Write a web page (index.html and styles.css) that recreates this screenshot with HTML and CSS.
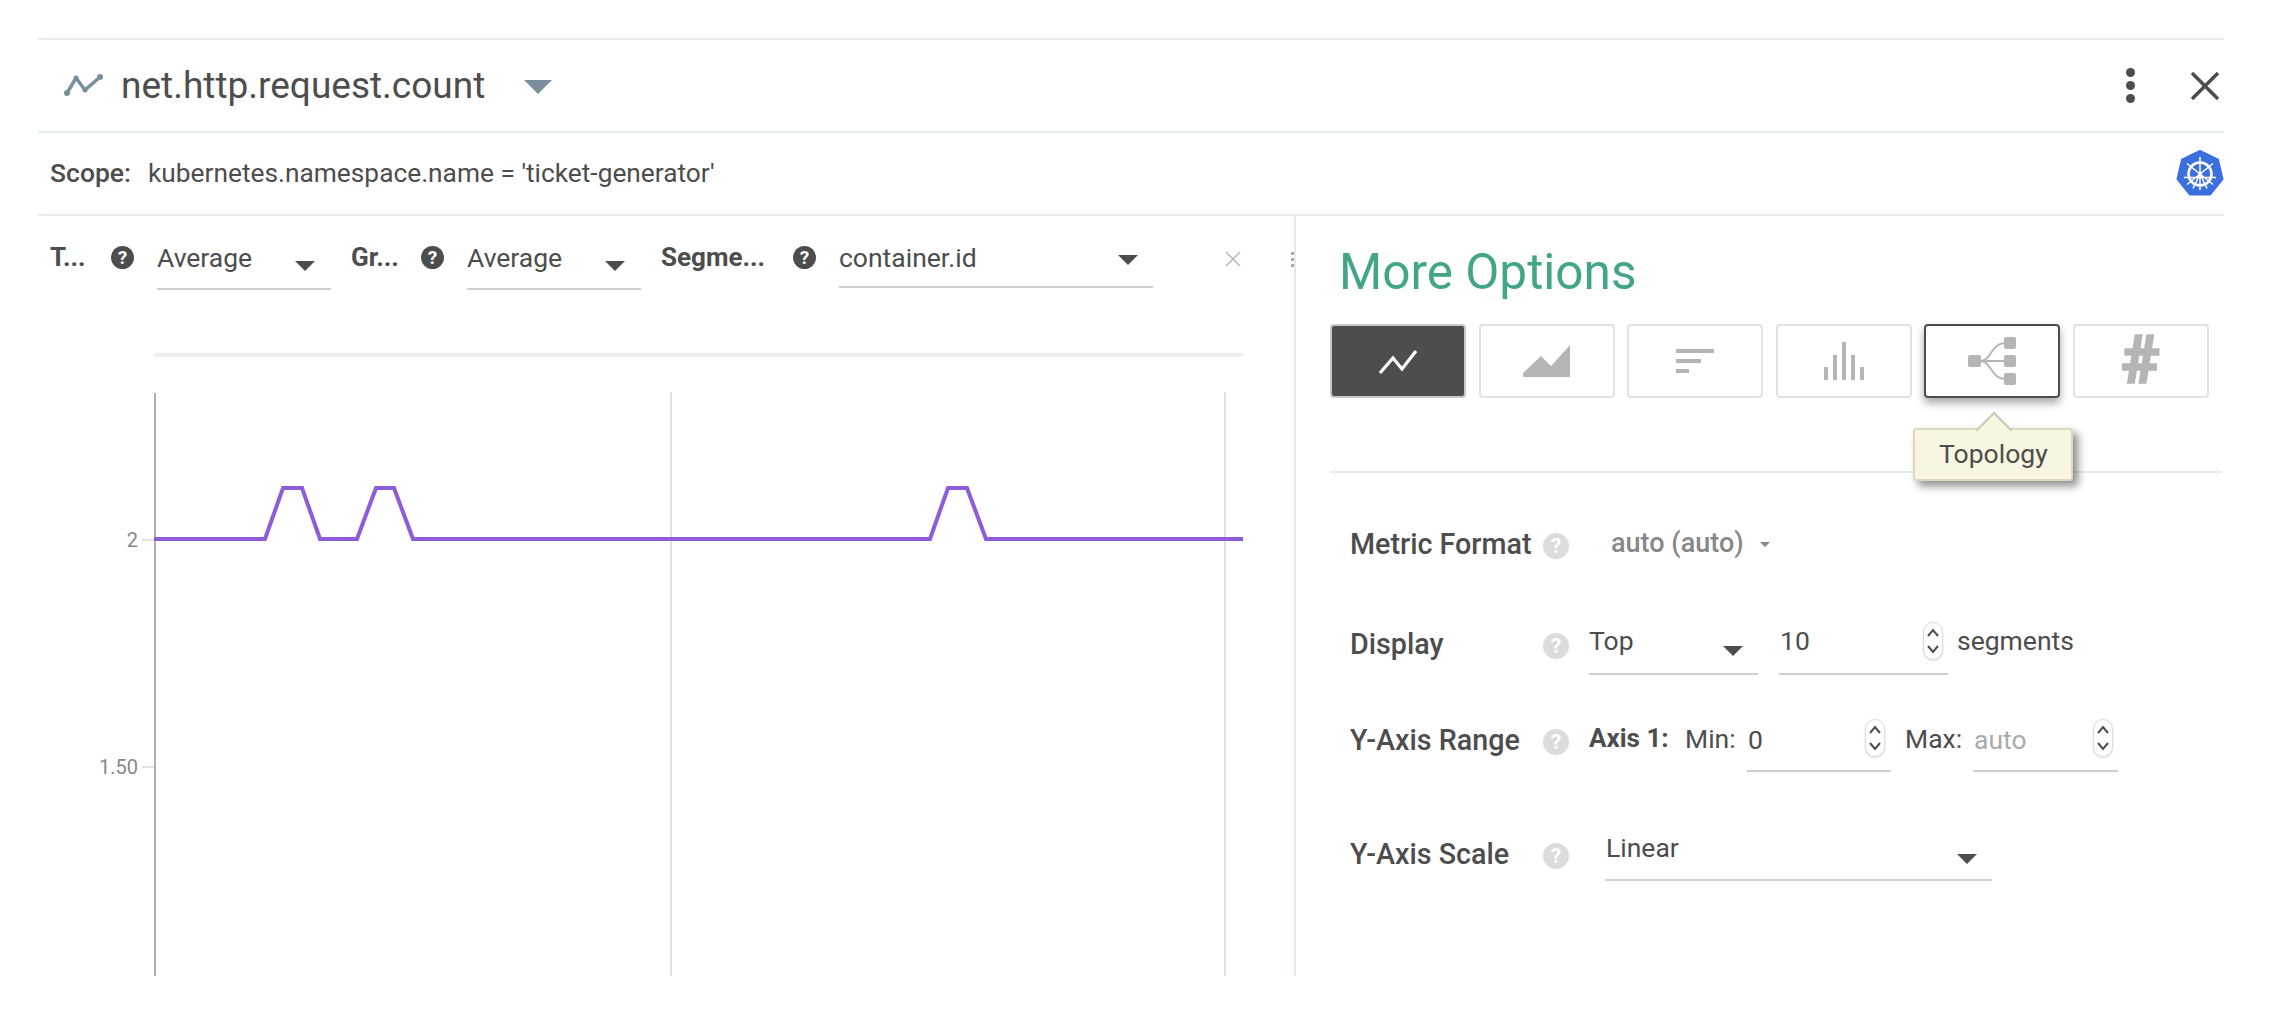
FILE: index.html
```html
<!DOCTYPE html>
<html lang="en">
<head>
<meta charset="utf-8">
<title>net.http.request.count</title>
<link rel="stylesheet" href="styles.css">
</head>
<body>
<div class="panel">
  <header class="titlebar">
    <svg class="trend" viewBox="0 0 40 22" width="40" height="22"><path d="M3 19 12 4 21 16 36 3" fill="none" stroke="#7a8f9e" stroke-width="3.500" stroke-linejoin="round"/><circle cx="3" cy="19" r="3" fill="#7a8f9e"/><circle cx="12" cy="4" r="2.500" fill="#7a8f9e"/><circle cx="21" cy="16" r="2.500" fill="#7a8f9e"/><circle cx="36" cy="3" r="3" fill="#7a8f9e"/></svg>
    <h1 class="metric">net.http.request.count</h1>
    <span class="title-caret"></span>
    <span class="kebab"><i></i><i></i><i></i></span>
    <svg class="close" viewBox="0 0 28 28" width="28" height="28"><path d="M1 1 27 27M27 1 1 27" stroke="#4d4d4d" stroke-width="3.500" fill="none"/></svg>
  </header>
  <div class="scopebar">
    <span class="scope-label">Scope:</span>
    <span class="scope-value">kubernetes.namespace.name = 'ticket-generator'</span>
    <svg class="k8s" viewBox="0 0 48 48" width="48" height="48">
      <path d="M24 1 42 9.700 46.500 29 34 44.500 14 44.500 1.500 29 6 9.700Z" fill="#3c6fde" stroke="#3c6fde" stroke-width="2" stroke-linejoin="round"/>
      <circle cx="24" cy="24" r="11.500" fill="none" stroke="#fff" stroke-width="2.600"/>
      <circle cx="24" cy="24" r="2" fill="#fff"/>
      <path d="M24 7V40M11 13.500 37 34.500M37 13.500 11 34.500M8 27.500 40 27.500M17 38.500 24 24 31 38.500" stroke="#fff" stroke-width="1.500" fill="none"/>
    </svg>
  </div>
  <div class="main">
    <section class="left">
      <div class="filters">
        <b class="flabel f-t">T...</b><span class="help-dark">?</span>
        <div class="select s-short"><span>Average</span><i class="caret c-low"></i></div>
        <b class="flabel f-gr">Gr...</b><span class="help-dark">?</span>
        <div class="select s-short"><span>Average</span><i class="caret c-low"></i></div>
        <b class="flabel f-seg">Segme...</b><span class="help-dark">?</span>
        <div class="select s-long"><span>container.id</span><i class="caret"></i></div>
        <svg class="clear" viewBox="0 0 16 16" width="16" height="16"><path d="M1 1 15 15M15 1 1 15" stroke="#b8b8b8" stroke-width="1.500" fill="none"/></svg>
        <span class="grip"><i></i><i></i><i></i></span>
      </div>
      <div class="band"></div>
      <svg class="chart" viewBox="38 357 1256 619" width="1256" height="619">
        <path d="M671 392V976M1225 392V976M142 540H155M142 767H155" stroke="#e2e2e2" stroke-width="2" fill="none"/>
        <path d="M155 393V976" stroke="#b0b0b0" stroke-width="2" fill="none"/>
        <path d="M154 539H265L283 488H302L320 539H357L376 488H394L413 539H930L948 488H967L986 539H1243" fill="none" stroke="#8e5bd9" stroke-width="4"/>
        <text class="tick" x="138" y="547">2</text>
        <text class="tick" x="138" y="774">1.50</text>
      </svg>
    </section>
    <section class="right">
      <h2 class="more">More Options</h2>
      <div class="types">
        <div class="type active"><svg viewBox="0 0 40 26" width="40" height="26"><path d="M2 25 15 10 24 21 38 3" fill="none" stroke="#fff" stroke-width="3.200"/></svg></div>
        <div class="type"><svg viewBox="0 0 48 32" width="48" height="32"><path d="M0 32V28L18 11 28 21 47 0V32Z" fill="#b5b5b5"/></svg></div>
        <div class="type"><div class="hbars"><i class="w1"></i><i class="w2"></i><i class="w3"></i></div></div>
        <div class="type"><div class="vbars"><i class="h1"></i><i class="h2"></i><i class="h3"></i><i class="h2"></i><i class="h1"></i></div></div>
        <div class="type hover">
          <svg viewBox="0 0 48 48" width="48" height="48"><path d="M12 24H38M12 24C24 24 22 6 38 6M12 24C24 24 22 42 38 42" fill="none" stroke="#b5b5b5" stroke-width="2"/><rect x="0" y="18" width="13" height="12" rx="2" fill="#b5b5b5"/><rect x="36" y="0" width="12" height="12" rx="2" fill="#b5b5b5"/><rect x="36" y="18" width="12" height="12" rx="2" fill="#b5b5b5"/><rect x="36" y="36" width="12" height="12" rx="2" fill="#b5b5b5"/></svg>
          <div class="tooltip">Topology</div>
        </div>
        <div class="type"><span class="hash">#</span></div>
      </div>
      <div class="rule"></div>
      <div class="row r-format">
        <b class="rlabel">Metric Format</b><span class="help-light">?</span>
        <span class="auto">auto (auto)</span><i class="mini-caret"></i>
      </div>
      <div class="row r-display">
        <b class="rlabel">Display</b><span class="help-light">?</span>
        <div class="select s-top"><span>Top</span><i class="caret c-low"></i></div>
        <div class="num n-ten"><span class="val">10</span><span class="spin"><svg viewBox="0 0 14 30" width="14" height="30"><path d="M2 10 7 4 12 10M2 20 7 26 12 20" fill="none" stroke="#4d4d4d" stroke-width="2"/></svg></span></div>
        <span class="unit">segments</span>
      </div>
      <div class="row r-range">
        <b class="rlabel">Y-Axis Range</b><span class="help-light">?</span>
        <b class="axis">Axis 1:</b><span class="minmax m-min">Min:</span>
        <div class="num n-min"><span class="val">0</span><span class="spin"><svg viewBox="0 0 14 30" width="14" height="30"><path d="M2 10 7 4 12 10M2 20 7 26 12 20" fill="none" stroke="#4d4d4d" stroke-width="2"/></svg></span></div>
        <span class="minmax m-max">Max:</span>
        <div class="num n-max"><span class="val muted">auto</span><span class="spin"><svg viewBox="0 0 14 30" width="14" height="30"><path d="M2 10 7 4 12 10M2 20 7 26 12 20" fill="none" stroke="#4d4d4d" stroke-width="2"/></svg></span></div>
      </div>
      <div class="row r-scale">
        <b class="rlabel">Y-Axis Scale</b><span class="help-light">?</span>
        <div class="select s-scale"><span>Linear</span><i class="caret c-low"></i></div>
      </div>
    </section>
  </div>
</div>
</body>
</html>
```
FILE: styles.css
```css
* { box-sizing: border-box; }
html, body { margin: 0; height: 1022px; overflow: hidden; background: #fff; }
body { font-family: Roboto, "Liberation Sans", sans-serif; color: #4d4d4d; font-size: 26px; }
.panel { margin: 38px 66px 0 38px; }

.titlebar { height: 95px; border-top: 2px solid #e4ecec; border-bottom: 2px solid #e4ecec; display: flex; align-items: center; padding-left: 26px; }
.trend { margin-right: 17px; margin-top: -1px; flex: none; }
.metric { margin: 0; font-size: 37px; font-weight: 400; line-height: 42px; }
.title-caret { width: 0; height: 0; border-left: 14px solid transparent; border-right: 14px solid transparent; border-top: 14px solid #7a8f9e; margin-left: 39px; margin-top: 2px; }
.kebab { margin-left: auto; display: flex; flex-direction: column; gap: 4px; margin-right: 56px; margin-top: -1px; }
.kebab i { display: block; width: 9px; height: 9px; border-radius: 50%; background: #4d4d4d; }
.close { margin-right: 5px; }

.scopebar { height: 83px; border-bottom: 2px solid #e4ecec; display: flex; align-items: center; padding-left: 12px; }
.scope-label { font-weight: 500; font-size: 26.500px; width: 98px; flex: none; margin-top: -2px; }
.scope-value { font-size: 26.300px; margin-top: -2px; }
.k8s { margin-left: auto; }

.main { display: flex; height: 760px; }
.left { width: 1258px; border-right: 2px solid #e4ecec; height: 760px; }
.filters { height: 137px; display: flex; align-items: flex-start; padding: 24px 0 0 12px; }
.flabel { font-size: 26px; font-weight: 700; line-height: 34px; flex: none; }
.f-t { width: 61px; }
.f-gr { width: 70px; margin-left: 20px; }
.f-seg { width: 132px; margin-left: 20px; }
.help-dark { width: 23px; height: 23px; border-radius: 50%; background: #4d4d4d; color: #fff; font-size: 19px; font-weight: 700; line-height: 23px; text-align: center; margin: 6px 23px 0 0; flex: none; }
.select { display: flex; justify-content: space-between; border-bottom: 2px solid #cfcfcf; height: 50px; line-height: 36px; font-size: 26.500px; flex: none; }
.s-short { width: 174px; padding-right: 16px; }
.s-long { width: 314px; height: 48px; padding-right: 15px; }
.caret { width: 0; height: 0; border-left: 10px solid transparent; border-right: 10px solid transparent; border-top: 10px solid #4d4d4d; margin-top: 15px; }
.c-low { margin-top: 21px; }
.clear { margin: 11px 0 0 72px; flex: none; }
.grip { display: flex; flex-direction: column; gap: 3px; margin: 12px 0 0 50px; flex: none; }
.grip i { display: block; width: 3px; height: 3px; background: #aaa; }

.band { height: 4px; width: 1089px; margin-left: 116px; background: #efefef; }
.chart { display: block; }
.tick { font-size: 20px; fill: #888; text-anchor: end; }

.right { flex: 1; padding-left: 32px; position: relative; }
.more { margin: 0 0 0 11px; font-size: 49.500px; font-weight: 400; color: #42a585; line-height: 56px; padding-top: 28px; height: 108px; }
.types { display: flex; gap: 12.600px; padding-left: 2px; }
.type { width: 136px; height: 74px; border: 2px solid #e2e2e2; border-radius: 4px; display: flex; align-items: center; justify-content: center; position: relative; flex: none; }
.active { background: #4d4d4d; border-color: #c8c8c8; }
.hover { border-color: #4d4d4d; box-shadow: 0 5px 8px rgba(0,0,0,.35); }
.hbars { display: flex; flex-direction: column; gap: 6px; width: 38px; }
.hbars i { display: block; height: 4px; background: #b5b5b5; }
.w1 { width: 38px; } .w2 { width: 25px; } .w3 { width: 13px; }
.vbars { display: flex; align-items: flex-end; gap: 5px; }
.vbars i { display: block; width: 4px; background: #b5b5b5; }
.h1 { height: 13px; } .h2 { height: 25px; } .h3 { height: 38px; }
.hash { font-size: 66px; font-weight: 900; color: #b5b5b5; line-height: 66px; -webkit-text-stroke: 1.500px #b5b5b5; }

.tooltip { position: absolute; left: -13px; top: 102px; width: 160px; height: 53px; background: #f8f5e0; border: 2px solid #ddd8c0; border-radius: 3px; box-shadow: 5px 5px 8px rgba(0,0,0,.45); font-size: 26.500px; line-height: 47px; text-align: center; z-index: 2; }
.tooltip::before { content: ""; position: absolute; left: 66px; top: -13px; width: 24px; height: 24px; background: #f8f5e0; border-left: 2px solid #ccc7b0; border-top: 2px solid #ccc7b0; transform: rotate(45deg); }

.rule { height: 2px; margin: 73px 0 0 2px; width: 892px; background: #e4ecec; }

.row { display: flex; align-items: flex-start; padding-left: 22px; }
.rlabel { width: 193px; font-size: 28.700px; font-weight: 500; line-height: 34px; flex: none; }
.help-light { width: 26px; height: 26px; border-radius: 50%; background: #dcdcdc; color: #fff; font-size: 21px; font-weight: 700; line-height: 26px; text-align: center; margin: 6px 20px 0 0; flex: none; }
.r-format { margin-top: 54px; }
.auto { font-weight: 500; color: #888; font-size: 27px; line-height: 32px; margin-left: 22px; }
.mini-caret { width: 0; height: 0; border-left: 5px solid transparent; border-right: 5px solid transparent; border-top: 5px solid #888; margin: 15px 0 0 16px; }
.r-display { margin-top: 66px; }
.s-top { width: 169px; height: 50px; padding-right: 15px; margin-top: -2px; line-height: 32px; }
.num { display: flex; justify-content: space-between; border-bottom: 2px solid #cfcfcf; height: 50px; line-height: 36px; font-size: 26.500px; flex: none; position: relative; }
.val { padding-left: 1px; }
.n-ten { width: 169px; margin: -2px 0 0 21px; padding-right: 5px; line-height: 32px; }
.spin { width: 20px; height: 38px; border: 1px solid #ddd; border-radius: 10px; box-shadow: 0 1px 2px rgba(0,0,0,.15); display: flex; align-items: center; justify-content: center; background: #fff; margin-top: -3px; }
.unit { margin: -2px 0 0 9px; font-size: 26.500px; line-height: 32px; }
.r-range { margin-top: 48px; }
.axis { font-size: 26px; font-weight: 700; line-height: 32px; margin-top: -1px; width: 96px; flex: none; }
.minmax { line-height: 32px; margin-top: 0; flex: none; font-size: 26.500px; }
.m-min { width: 62px; }
.m-max { width: 68px; margin-left: 14px; }
.n-min { width: 144px; margin-top: -1px; padding-right: 6px; }
.n-max { width: 145px; margin-top: -1px; padding-right: 5px; }
.muted { color: #aaa; }
.r-scale { margin-top: 65px; }
.s-scale { width: 387px; height: 48px; padding: 0 15px 0 1px; margin: -4px 0 0 16px; line-height: 30px; }
```
